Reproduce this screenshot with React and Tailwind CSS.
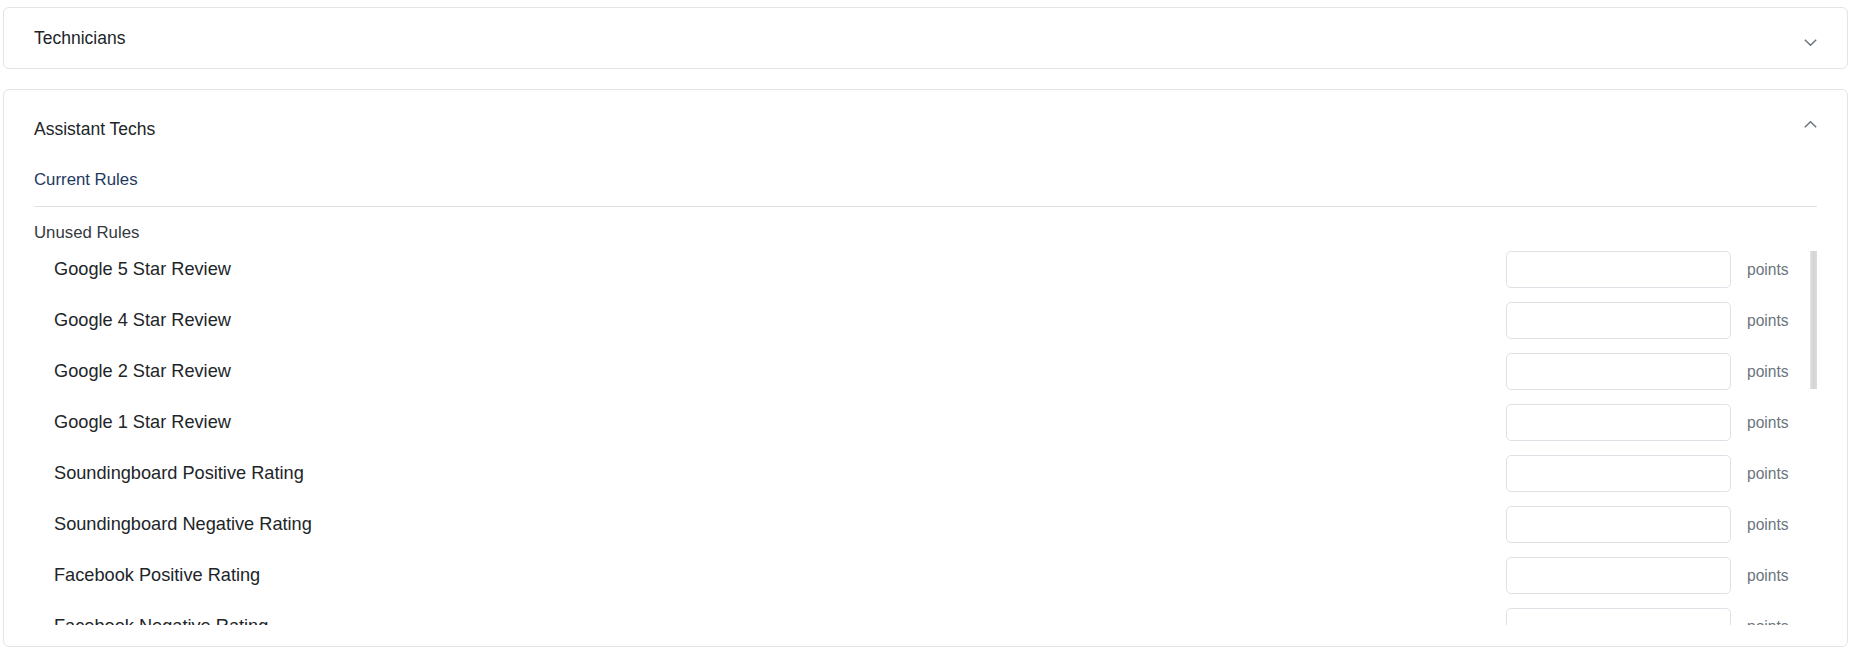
import { useState } from "react";

const rules = [
    "Google 5 Star Review",
    "Google 4 Star Review",
    "Google 2 Star Review",
    "Google 1 Star Review",
    "Soundingboard Positive Rating",
    "Soundingboard Negative Rating",
    "Facebook Positive Rating",
    "Facebook Negative Rating",
    "Yelp 5 Star Review",
    "Yelp 4 Star Review",
    "Yelp 2 Star Review",
    "Yelp 1 Star Review",
    "Callback Required",
    "Job Completed On Time",
    "Job Completed Late",
    "Membership Sold",
    "Upsell Completed",
    "Safety Violation",
    "Perfect Attendance",
    "Customer Complaint",
];

function Chevron({ up, className }) {
    return (
        <svg
            width="13"
            height="7"
            viewBox="0 0 13 7"
            fill="none"
            className={className}
        >
            <path
                d={up ? "M0.8 6.3L6.5 0.8L12.2 6.3" : "M0.8 0.7L6.5 6.2L12.2 0.7"}
                stroke="#6c757d"
                strokeWidth="1.5"
            />
        </svg>
    );
}

function RuleRow({ name }) {
    const [value, setValue] = useState("");
    return (
        <div className="flex items-center h-[37px] shrink-0">
            <span className="flex-1 pl-[20px] text-[18.2px] text-[#212529]">{name}</span>
            <input
                value={value}
                onChange={(e) => setValue(e.target.value)}
                className="w-[225px] h-[37px] border border-[#dee2e6] rounded-[5px] bg-white px-3 outline-none"
            />
            <span className="w-[78px] pl-[16px] text-[15.6px] text-[#6c757d]">points</span>
        </div>
    );
}

export default function App() {
    return (
        <div className="bg-white pt-[7px] pl-[3px] pr-[7px] font-['Liberation_Sans',Arial,sans-serif]">
            <div className="border border-[#e2e4e7] rounded-[6px] bg-white">
                <div className="flex items-center justify-between h-[60px] pl-[30px] pr-[30px]">
                    <span className="mt-[1px] text-[17.5px] text-[#212529]">Technicians</span>
                    <Chevron className="mt-[9px]" />
                </div>
            </div>

            <div className="mt-[20px] border border-[#e2e4e7] rounded-[6px] bg-white px-[30px] pt-[9px] pb-[21px]">
                <div className="flex items-center justify-between h-[60px]">
                    <span className="mt-[1px] text-[17.5px] text-[#212529]">Assistant Techs</span>
                    <Chevron up className="mb-[9px]" />
                </div>

                <div className="mt-[9px] h-[24px] leading-[24px] text-[16.8px] text-[#1f3a5f]">
                    Current Rules
                </div>
                <div className="mt-[14px] h-px bg-[#dee2e6]" />
                <div className="mt-[14px] h-[24px] leading-[24px] text-[16.8px] text-[#343a40]">
                    Unused Rules
                </div>

                <div className="mt-[6px] flex h-[374px]">
                    <div className="flex-1 flex flex-col gap-[14px] overflow-hidden">
                        {rules.map((rule) => (
                            <RuleRow key={rule} name={rule} />
                        ))}
                    </div>
                    <div className="w-[8px]">
                        <div className="ml-px w-[7px] h-[138px] bg-[linear-gradient(to_right,#e4e4e4,#d3d3d3_45%,#dcdcdc)]" />
                    </div>
                </div>
            </div>
        </div>
    );
}
